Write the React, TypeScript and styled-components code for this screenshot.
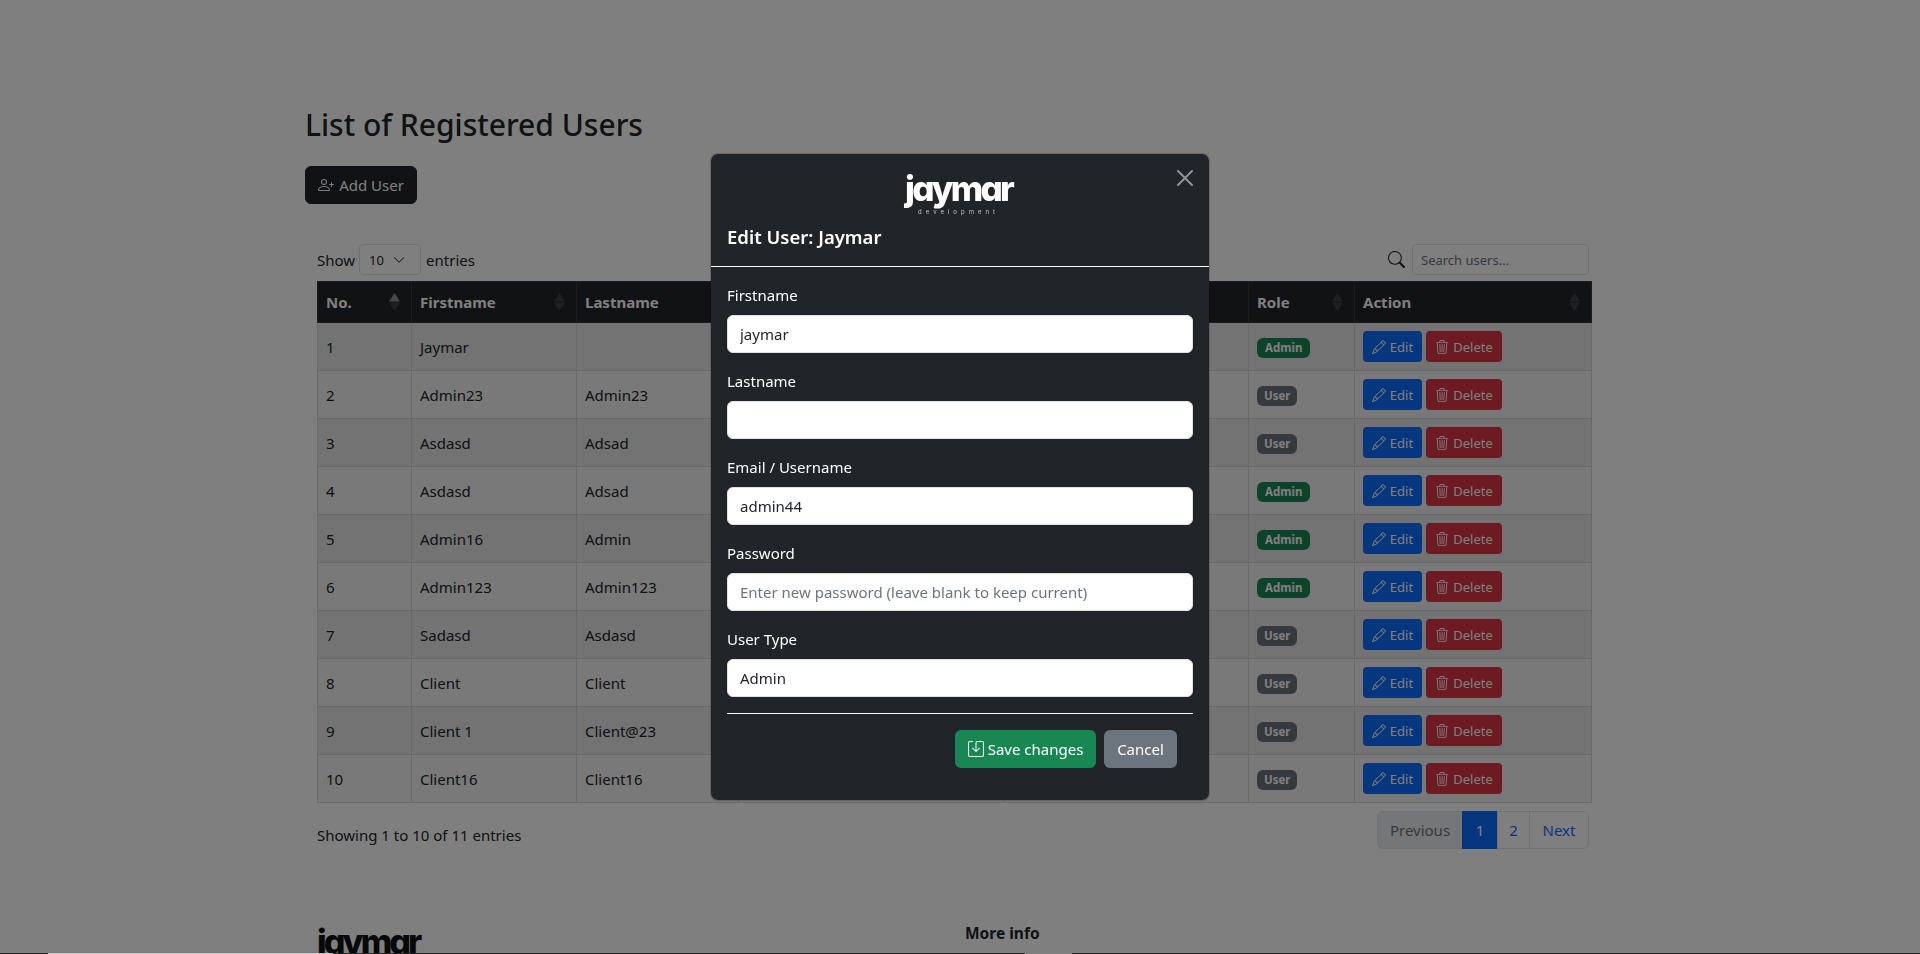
import { FunctionComponent } from 'react';
import styled, { createGlobalStyle } from 'styled-components';
import { BsPersonPlus, BsPencil, BsTrash3, BsSearch, BsSave, BsChevronDown } from 'react-icons/bs';

const FONT = '"Noto Sans", "Open Sans", sans-serif';

const GlobalStyle = createGlobalStyle`
  html, body {
    margin: 0;
    height: 100%;
    overflow: hidden;
    background: #fff;
  }

  body {
    font-family: ${FONT};
    font-size: 15px;
    line-height: 24px;
    color: #212529;
  }

  * {
    box-sizing: border-box;
  }
`;

const Page = styled.main`
  height: 954px;
  overflow: hidden;
  padding: 106px 0 0 305px;
`;

const Title = styled.h2`
  margin: 0 0 22px;
  font-size: 30px;
  line-height: 38px;
  font-weight: 500;
`;

const AddButton = styled.button`
  display: inline-flex;
  align-items: center;
  gap: 5px;
  height: 38px;
  width: 112px;
  justify-content: center;
  padding: 0;
  border: 1px solid #212529;
  border-radius: 6px;
  background: #212529;
  color: #fff;
  font: 15px ${FONT};
`;

const TableArea = styled.section`
  width: 1272px;
  margin: 40px 0 0 12px;
`;

const TopBar = styled.div`
  display: flex;
  align-items: center;
  justify-content: space-between;
  height: 31px;
  margin-bottom: 6px;
`;

const LengthControl = styled.label`
  display: flex;
  align-items: center;
  gap: 4px;
`;

const SmallSelect = styled.div`
  display: flex;
  align-items: center;
  justify-content: space-between;
  width: 62px;
  height: 31px;
  margin-right: 1px;
  padding: 0 15px 0 9px;
  border: 1px solid #dee2e6;
  border-radius: 4px;
  font-size: 13px;
`;

const SearchControl = styled.div`
  display: flex;
  align-items: center;
  gap: 7px;
`;

const SearchInput = styled.input`
  width: 177px;
  height: 31px;
  padding: 0 8px;
  border: 1px solid #dee2e6;
  border-radius: 4px;
  background: #fff;
  font: 13px ${FONT};

  &::placeholder {
    color: #6c757d;
  }
`;

const Table = styled.table`
  width: 1274px;
  table-layout: fixed;
  border-collapse: collapse;
`;

const HeadCell = styled.th`
  height: 41px;
  padding: 0 11px 0 8px;
  border: 1px solid #373b3e;
  background: #212529;
  color: #fff;
  font-weight: 700;
  font-size: 15px;
  text-align: left;
`;

const HeadInner = styled.div`
  display: flex;
  align-items: center;
  justify-content: space-between;
`;

const Row = styled.tr<{ $striped: boolean }>`
  background: ${p => (p.$striped ? '#e6e6e6' : '#f2f2f2')};
`;

const Cell = styled.td`
  height: 48px;
  padding: 0 8px;
  border: 1px solid #d3d3d3;
`;

const Badge = styled.span<{ $admin: boolean }>`
  display: inline-block;
  height: 20px;
  padding: 0 ${p => (p.$admin ? '8px' : '7px')};
  border-radius: 6px;
  background: ${p => (p.$admin ? '#198754' : '#6c757d')};
  color: #fff;
  font-size: 11.5px;
  font-weight: 700;
  line-height: 20px;
  vertical-align: middle;
`;

const Actions = styled.div`
  display: flex;
  gap: 4px;
`;

const SmallButton = styled.button<{ $danger?: boolean }>`
  display: inline-flex;
  align-items: center;
  justify-content: center;
  gap: 4px;
  width: ${p => (p.$danger ? '76px' : '59px')};
  height: 31px;
  padding: 0;
  border: 0;
  border-radius: 4px;
  background: ${p => (p.$danger ? '#dc3545' : '#0d6efd')};
  color: #fff;
  font: 13px ${FONT};
`;

const BottomBar = styled.div`
  display: flex;
  align-items: flex-start;
  justify-content: space-between;
  margin-top: 8px;
`;

const Info = styled.div`
  padding-top: 12px;
`;

const Pager = styled.nav`
  display: flex;
  height: 38px;
`;

const PageLink = styled.a<{ $state?: 'active' | 'disabled'; $width: number }>`
  display: flex;
  align-items: center;
  justify-content: center;
  width: ${p => p.$width}px;
  margin-left: -1px;
  border: 1px solid ${p => (p.$state === 'active' ? '#0d6efd' : '#dee2e6')};
  background: ${p => (p.$state === 'active' ? '#0d6efd' : p.$state === 'disabled' ? '#e9ecef' : '#fff')};
  color: ${p => (p.$state === 'active' ? '#fff' : p.$state === 'disabled' ? '#6c757d' : '#0d6efd')};

  &:first-child {
    border-radius: 6px 0 0 6px;
  }

  &:last-child {
    border-radius: 0 6px 6px 0;
  }
`;

const Footer = styled.footer`
  display: flex;
  margin: 72px 0 0 12px;
`;

const FooterBrand = styled.div`
  width: 648px;
  padding-top: 3px;
`;

const FooterHeading = styled.div`
  font-size: 15.5px;
  font-weight: 700;
`;

const Logo = styled.div<{ $light?: boolean }>`
  display: inline-flex;
  flex-direction: column;
  align-items: center;
  height: 52px;
  flex: none;
  margin-right: ${p => (p.$light ? '3px' : '0')};
  color: ${p => (p.$light ? '#fff' : '#111')};
`;

const LogoWord = styled.span<{ $small?: boolean }>`
  font-family: Inter, sans-serif;
  font-feature-settings: 'cv11';
  font-size: ${p => (p.$small ? '34px' : '35px')};
  font-weight: 800;
  line-height: 36px;
  letter-spacing: ${p => (p.$small ? '-2.9px' : '-2.7px')};
`;

const LogoTag = styled.span`
  margin-top: 3px;
  font-family: Inter, sans-serif;
  font-size: 6px;
  line-height: 6px;
  letter-spacing: 4px;
  opacity: 0.7;
`;

const Backdrop = styled.div`
  position: fixed;
  inset: 0;
  display: flex;
  align-items: center;
  justify-content: center;
  background: rgba(0, 0, 0, 0.5);
`;

const EdgeStrip = styled.div`
  position: fixed;
  left: 0;
  right: 0;
  bottom: 0;
  height: 1px;
  background: linear-gradient(
    to right,
    #222 48px,
    #c4c4c4 48px,
    #c4c4c4 333px,
    #222 333px,
    #222 1025px,
    #808080 1025px,
    #808080 1072px,
    #222 1072px
  );
`;

const Modal = styled.div`
  position: relative;
  width: 500px;
  height: 648px;
  border: 1px solid rgba(0, 0, 0, 0.175);
  border-radius: 8px;
  background: #212529;
  background-clip: padding-box;
  color: #fff;
`;

const ModalHeader = styled.header`
  display: flex;
  flex-direction: column;
  align-items: center;
  height: 113px;
  padding: 16px 16px 15px;
  border-bottom: 1px solid #fff;
`;

const ModalTitle = styled.h5`
  align-self: flex-start;
  margin: 0;
  font-size: 18.5px;
  line-height: 30px;
  font-weight: 600;
`;

const CloseButton = styled.button`
  position: absolute;
  top: 16px;
  right: 16px;
  width: 16px;
  height: 16px;
  padding: 0;
  border: 0;
  background: none;
  opacity: 0.5;
  color: #fff;
`;

const ModalBody = styled.form`
  padding: 16px;
`;

const Field = styled.div`
  margin-bottom: 16px;
`;

const FieldLabel = styled.label`
  display: block;
  margin-bottom: 8px;
`;

const TextInput = styled.input`
  display: block;
  width: 100%;
  height: 38px;
  padding: 0 12px;
  border: 1px solid #dee2e6;
  border-radius: 6px;
  background: #fff;
  color: #212529;
  font: 15px ${FONT};

  &::placeholder {
    color: #6c757d;
  }
`;

const Divider = styled.hr`
  margin: 0;
  border: 0;
  border-top: 1px solid #fff;
`;

const ModalActions = styled.div`
  display: flex;
  justify-content: flex-end;
  gap: 8px;
  padding: 16px;
`;

const ModalButton = styled.button<{ $save?: boolean }>`
  display: inline-flex;
  align-items: center;
  justify-content: center;
  gap: 4px;
  width: ${p => (p.$save ? '141px' : '73px')};
  height: 38px;
  padding: 0;
  border: 0;
  border-radius: 6px;
  background: ${p => (p.$save ? '#198754' : '#6c757d')};
  color: #fff;
  font: 15px ${FONT};
`;

const SortMark: FunctionComponent<{ active?: boolean }> = ({ active }) => (
  <svg width="11" height="18" viewBox="0 0 11 18">
    <path d="M5.5 0 11 8.5H0z" fill="#fff" opacity={active ? 0.5 : 0.125} />
    <path d="M5.5 18 0 9.5h11z" fill="#fff" opacity={0.125} />
  </svg>
);

const columns = [
  { name: 'No.', width: 94 },
  { name: 'Firstname', width: 165 },
  { name: 'Lastname', width: 162 },
  { name: '', width: 265 },
  { name: '', width: 245 },
  { name: 'Role', width: 106 },
  { name: 'Action', width: 237 },
];

const users = [
  { first: 'Jaymar', last: '', admin: true },
  { first: 'Admin23', last: 'Admin23', admin: false },
  { first: 'Asdasd', last: 'Adsad', admin: false },
  { first: 'Asdasd', last: 'Adsad', admin: true },
  { first: 'Admin16', last: 'Admin', admin: true },
  { first: 'Admin123', last: 'Admin123', admin: true },
  { first: 'Sadasd', last: 'Asdasd', admin: false },
  { first: 'Client', last: 'Client', admin: false },
  { first: 'Client 1', last: 'Client@23', admin: false },
  { first: 'Client16', last: 'Client16', admin: false },
];

const fields = [
  { label: 'Firstname', value: 'jaymar' },
  { label: 'Lastname', value: '' },
  { label: 'Email / Username', value: 'admin44' },
  { label: 'Password', value: '', placeholder: 'Enter new password (leave blank to keep current)' },
  { label: 'User Type', value: 'Admin' },
];

export default function App() {
  return (
    <>
      <GlobalStyle />
      <Page>
        <Title>List of Registered Users</Title>
        <AddButton>
          <BsPersonPlus size={16} />
          Add User
        </AddButton>

        <TableArea>
          <TopBar>
            <LengthControl>
              Show
              <SmallSelect>
                10
                <BsChevronDown size={12} />
              </SmallSelect>
              entries
            </LengthControl>
            <SearchControl>
              <BsSearch size={17} />
              <SearchInput placeholder="Search users..." readOnly />
            </SearchControl>
          </TopBar>

          <Table>
            <colgroup>
              {columns.map((col, i) => (
                <col key={i} width={col.width} />
              ))}
            </colgroup>
            <thead>
              <tr>
                {columns.map((col, i) => (
                  <HeadCell key={i}>
                    <HeadInner>
                      {col.name}
                      <SortMark active={i === 0} />
                    </HeadInner>
                  </HeadCell>
                ))}
              </tr>
            </thead>
            <tbody>
              {users.map((user, i) => (
                <Row key={i} $striped={i % 2 === 0}>
                  <Cell>{i + 1}</Cell>
                  <Cell>{user.first}</Cell>
                  <Cell>{user.last}</Cell>
                  <Cell />
                  <Cell />
                  <Cell>
                    <Badge $admin={user.admin}>{user.admin ? 'Admin' : 'User'}</Badge>
                  </Cell>
                  <Cell>
                    <Actions>
                      <SmallButton>
                        <BsPencil size={14} />
                        Edit
                      </SmallButton>
                      <SmallButton $danger>
                        <BsTrash3 size={14} />
                        Delete
                      </SmallButton>
                    </Actions>
                  </Cell>
                </Row>
              ))}
            </tbody>
          </Table>

          <BottomBar>
            <Info>Showing 1 to 10 of 11 entries</Info>
            <Pager>
              <PageLink $state="disabled" $width={86}>Previous</PageLink>
              <PageLink $state="active" $width={36}>1</PageLink>
              <PageLink $width={33}>2</PageLink>
              <PageLink $width={60}>Next</PageLink>
            </Pager>
          </BottomBar>
        </TableArea>

        <Footer>
          <FooterBrand>
            <Logo>
              <LogoWord $small>jaymar</LogoWord>
            </Logo>
          </FooterBrand>
          <FooterHeading>More info</FooterHeading>
        </Footer>
      </Page>

      <Backdrop>
        <Modal>
          <CloseButton aria-label="Close">
            <svg width="16" height="16" viewBox="0 0 16 16" fill="currentColor">
              <path d="M.293.293a1 1 0 0 1 1.414 0L8 6.586l6.293-6.293a1 1 0 1 1 1.414 1.414L9.414 8l6.293 6.293a1 1 0 0 1-1.414 1.414L8 9.414l-6.293 6.293a1 1 0 0 1-1.414-1.414L6.586 8 .293 1.707a1 1 0 0 1 0-1.414z" />
            </svg>
          </CloseButton>
          <ModalHeader>
            <Logo $light>
              <LogoWord>jaymar</LogoWord>
              <LogoTag>development</LogoTag>
            </Logo>
            <ModalTitle>Edit User: Jaymar</ModalTitle>
          </ModalHeader>
          <ModalBody>
            {fields.map(field => (
              <Field key={field.label}>
                <FieldLabel>{field.label}</FieldLabel>
                <TextInput defaultValue={field.value} placeholder={field.placeholder} />
              </Field>
            ))}
            <Divider />
            <ModalActions>
              <ModalButton $save type="button">
                <BsSave size={16} />
                Save changes
              </ModalButton>
              <ModalButton type="button">Cancel</ModalButton>
            </ModalActions>
          </ModalBody>
        </Modal>
      </Backdrop>
      <EdgeStrip />
    </>
  );
}
